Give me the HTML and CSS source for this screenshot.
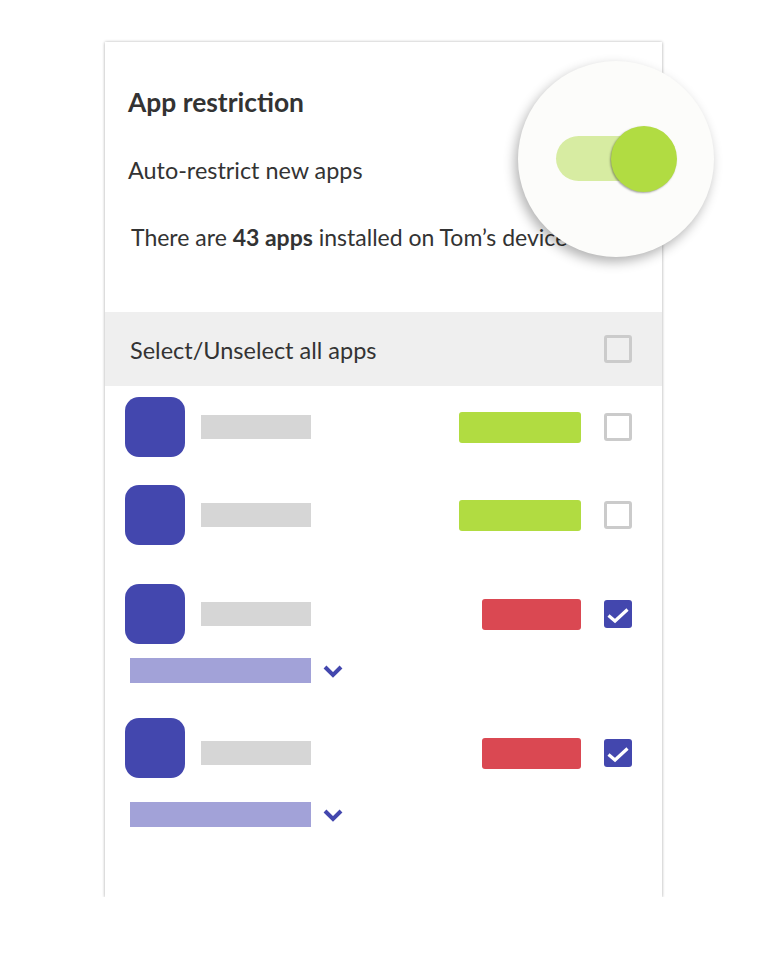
FILE: index.html
```html
<!DOCTYPE html>
<html lang="en">
<head>
<meta charset="utf-8">
<title>App restriction</title>
<link rel="stylesheet" href="styles.css">
</head>
<body>
<div class="card">
  <div class="head">
    <h1 class="title">App restriction</h1>
    <p class="sub">Auto-restrict new apps</p>
    <p class="count">There are <b>43 apps</b> installed on Tom’s device</p>
  </div>
  <div class="band">
    <span class="band-text">Select/Unselect all apps</span>
    <span class="box"></span>
  </div>
  <div class="list">
    <div class="row r1">
      <span class="icon"></span>
      <span class="name"></span>
      <span class="tag green"></span>
      <span class="box"></span>
    </div>
    <div class="row r2">
      <span class="icon"></span>
      <span class="name"></span>
      <span class="tag green"></span>
      <span class="box"></span>
    </div>
    <div class="row r3">
      <span class="icon"></span>
      <span class="name"></span>
      <span class="tag red"></span>
      <span class="box checked"><svg width="28" height="28" viewBox="0 0 28 28"><path d="M4.5 15.5 L11 21 L23.5 9.5" fill="none" stroke="#fff" stroke-width="3.2"/></svg></span>
    </div>
    <div class="more m3">
      <span class="pbar"></span>
      <svg class="chev" width="20" height="13" viewBox="0 0 20 13"><path d="M2 2 L10 10 L18 2" fill="none" stroke="#4347ae" stroke-width="4"/></svg>
    </div>
    <div class="row r4">
      <span class="icon"></span>
      <span class="name"></span>
      <span class="tag red"></span>
      <span class="box checked"><svg width="28" height="28" viewBox="0 0 28 28"><path d="M4.5 15.5 L11 21 L23.5 9.5" fill="none" stroke="#fff" stroke-width="3.2"/></svg></span>
    </div>
    <div class="more m4">
      <span class="pbar"></span>
      <svg class="chev" width="20" height="13" viewBox="0 0 20 13"><path d="M2 2 L10 10 L18 2" fill="none" stroke="#4347ae" stroke-width="4"/></svg>
    </div>
  </div>
  <div class="lens">
    <div class="toggle">
      <span class="track"></span>
      <span class="knob"></span>
    </div>
  </div>
</div>
</body>
</html>
```
FILE: styles.css
```css
html, body {
  margin: 0;
  padding: 0;
  background: #ffffff;
}
body {
  padding: 42px 0 0 105px;
  font-family: Lato, "Open Sans", sans-serif;
  color: #333333;
}
.card {
  position: relative;
  box-sizing: border-box;
  width: 557px;
  height: 855px;
  background: #ffffff;
  box-shadow: 0 0 3px rgba(0,0,0,0.25), 0 1px 3px rgba(0,0,0,0.12);
}
.head {
  padding: 45px 0 0 23px;
  height: 225px;
  box-sizing: border-box;
}
.title {
  margin: 0;
  font-size: 26.4px;
  line-height: 30px;
  font-weight: 700;
}
.sub {
  margin: 39px 0 0 0;
  font-size: 23.4px;
  line-height: 28px;
}
.count {
  margin: 39px 0 0 3px;
  font-size: 23px;
  line-height: 28px;
  white-space: nowrap;
}
.count b { font-weight: 700; }
.band {
  margin-top: 45px;
  height: 74px;
  background: #efefef;
  display: flex;
  align-items: center;
  justify-content: space-between;
  padding: 0 30px 0 25px;
}
.band-text {
  font-size: 23.5px;
  line-height: 28px;
  padding-top: 2px;
}
.box {
  box-sizing: border-box;
  width: 28px;
  height: 28px;
  border: 3px solid #cbcbcb;
  border-radius: 3px;
  flex: none;
}
.box.checked {
  border: none;
  background: #4347ae;
  display: flex;
}
.list {
  padding: 11px 30px 0 20px;
}
.row {
  display: flex;
  align-items: center;
  height: 60px;
}
.r2 { margin-top: 28px; }
.r3 { margin-top: 39px; }
.r4 { margin-top: 35px; height: 70px; }
.r4 .icon { align-self: flex-start; }
.icon {
  width: 60px;
  height: 60px;
  border-radius: 14px;
  background: #4347ae;
  flex: none;
}
.name {
  width: 110px;
  height: 24px;
  margin-left: 16px;
  background: #d6d6d6;
}
.tag {
  margin-left: auto;
  margin-right: 23px;
  height: 31px;
  border-radius: 3px;
}
.green { width: 122px; background: #b1dc41; }
.red { width: 99px; background: #da4852; }
.more {
  display: flex;
  align-items: center;
  padding-left: 5px;
}
.m3 { margin-top: 14px; }
.m4 { margin-top: 14px; }
.pbar {
  width: 181px;
  height: 25px;
  background: #a2a2d8;
}
.chev {
  margin-left: 12px;
  margin-top: 1px;
}
.lens {
  position: absolute;
  left: 413px;
  top: 19px;
  width: 196px;
  height: 196px;
  border-radius: 50%;
  background: #fcfcfa;
  box-shadow: -3px 5px 12px rgba(0,0,0,0.3);
  display: flex;
  align-items: center;
  justify-content: center;
}
.toggle {
  position: relative;
  width: 121px;
  height: 66px;
  margin-top: -1px;
}
.track {
  position: absolute;
  left: 0;
  top: 10px;
  width: 110px;
  height: 45px;
  border-radius: 23px;
  background: #d7eca2;
}
.knob {
  position: absolute;
  right: 0;
  top: 0;
  width: 66px;
  height: 66px;
  border-radius: 50%;
  background: #b1dc42;
  box-shadow: -1px 1px 2px rgba(0,0,0,0.35);
}
```
